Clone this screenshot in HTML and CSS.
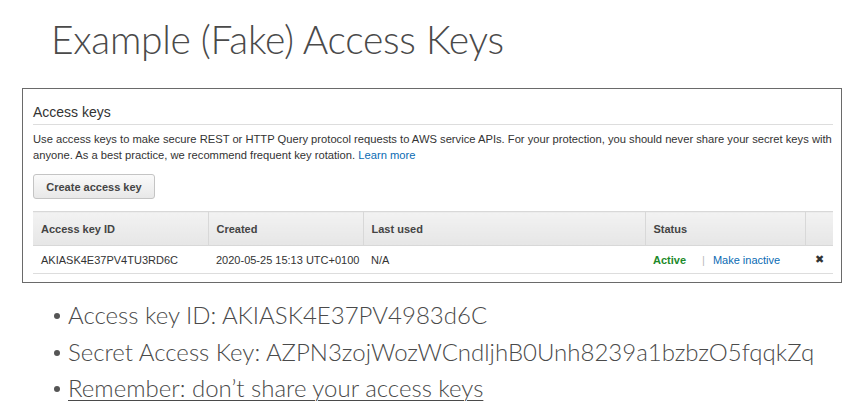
FILE: index.html
```html
<!DOCTYPE html>
<html>
<head>
<meta charset="utf-8">
<link rel="stylesheet" href="styles.css">
</head>
<body>
<h1 class="title">Example (Fake) Access Keys</h1>
<div class="panel">
  <h2 class="panel-head">Access keys</h2>
  <p class="desc"><span class="line">Use access keys to make secure REST or HTTP Query protocol requests to AWS service APIs. For your protection, you should never share your secret keys with</span><span class="line">anyone. As a best practice, we recommend frequent key rotation. <a class="link">Learn more</a></span></p>
  <button class="btn">Create access key</button>
  <table class="keys">
    <thead>
      <tr>
        <th class="c1">Access key ID</th>
        <th class="c2">Created</th>
        <th class="c3">Last used</th>
        <th class="c4">Status</th>
        <th class="c5"></th>
      </tr>
    </thead>
    <tbody>
      <tr>
        <td>AKIASK4E37PV4TU3RD6C</td>
        <td class="created">2020-05-25 15:13 UTC+0100</td>
        <td class="na">N/A</td>
        <td class="status"><span class="active">Active</span><span class="sep">|</span><a class="link">Make inactive</a></td>
        <td class="del">&#x2716;</td>
      </tr>
    </tbody>
  </table>
</div>
<ul class="bullets">
  <li>Access key ID: AKIASK4E37PV4983d6C</li>
  <li>Secret Access Key: AZPN3zojWozWCndljhB0Unh8239a1bzbzO5fqqkZq</li>
  <li><u>Remember: don’t share your access keys</u></li>
</ul>
</body>
</html>
```
FILE: styles.css
```css
html, body { margin: 0; padding: 0; background: #fff; }
body { width: 863px; height: 416px; overflow: hidden; }

.title {
  margin: 0;
  padding: 16px 0 0 51px;
  font-family: "Lato", sans-serif;
  font-weight: 300;
  font-size: 39px;
  line-height: 46px;
  color: #4a4a4a;
  letter-spacing: -0.3px;
  height: 72px;
  box-sizing: border-box;
}

.panel {
  margin: 16px 0 0 22px;
  width: 820px;
  height: 195px;
  box-sizing: border-box;
  border: 1px solid #6a6a6a;
  padding: 0 8px 0 10px;
  font-family: "Liberation Sans", Arial, sans-serif;
  color: #444;
}

.panel-head {
  margin: 0;
  padding-top: 15px;
  height: 36px;
  box-sizing: border-box;
  font-weight: normal;
  font-size: 14px;
  line-height: 17px;
  color: #333;
  border-bottom: 1px solid #ddd;
}

.desc {
  margin: 0;
  padding-top: 6px;
  font-size: 11.2px;
  line-height: 16px;
  color: #333;
}
.desc .line { display: block; white-space: nowrap; }

.link { color: #0a6bb3; text-decoration: none; }

.btn {
  display: block;
  margin-top: 11px;
  width: 122px;
  height: 25px;
  padding: 0;
  font-family: "Liberation Sans", Arial, sans-serif;
  font-weight: bold;
  font-size: 11px;
  color: #444;
  border: 1px solid #c4c4c4;
  border-radius: 3px;
  background: linear-gradient(#fafafa, #e8e8e8);
}

.keys {
  margin-top: 12px;
  width: 800px;
  border-collapse: collapse;
  font-size: 11px;
}

.keys th {
  height: 34px;
  box-sizing: border-box;
  padding: 0 8px;
  text-align: left;
  font-weight: bold;
  color: #444;
  background: linear-gradient(#f2f2f2, #e6e6e6);
  border: 1px solid #d8d8d8;
}
.keys th.c1 { width: 175px; border-left: none; }
.keys th.c2 { width: 155px; }
.keys th.c3 { width: 282px; }
.keys th.c4 { width: 160px; }
.keys th.c5 { width: 28px; border-right: none; }

.keys td {
  height: 27px;
  padding: 0 8px;
  color: #333;
  border-bottom: 1px solid #ddd;
  white-space: nowrap;
}
.keys td.created { padding-right: 0; }
.keys td.na { padding-left: 8px; }

.active { color: #1d8a2a; font-weight: bold; }
.sep { color: #bbb; margin: 0 8px 0 16px; }
.del { text-align: center; color: #333; font-size: 11px; }

.bullets {
  margin: 14px 0 0 0;
  padding: 0 0 0 68px;
  font-family: "Lato", sans-serif;
  font-weight: 300;
  font-size: 24px;
  line-height: 36.5px;
  color: #4a4a4a;
}
.bullets li { list-style: none; position: relative; }
.bullets li::before {
  content: "";
  position: absolute;
  left: -14px;
  top: 16px;
  width: 6px;
  height: 6px;
  border-radius: 50%;
  background: #555;
}
.bullets u { text-decoration-thickness: 1px; text-underline-offset: 3px; }
```
